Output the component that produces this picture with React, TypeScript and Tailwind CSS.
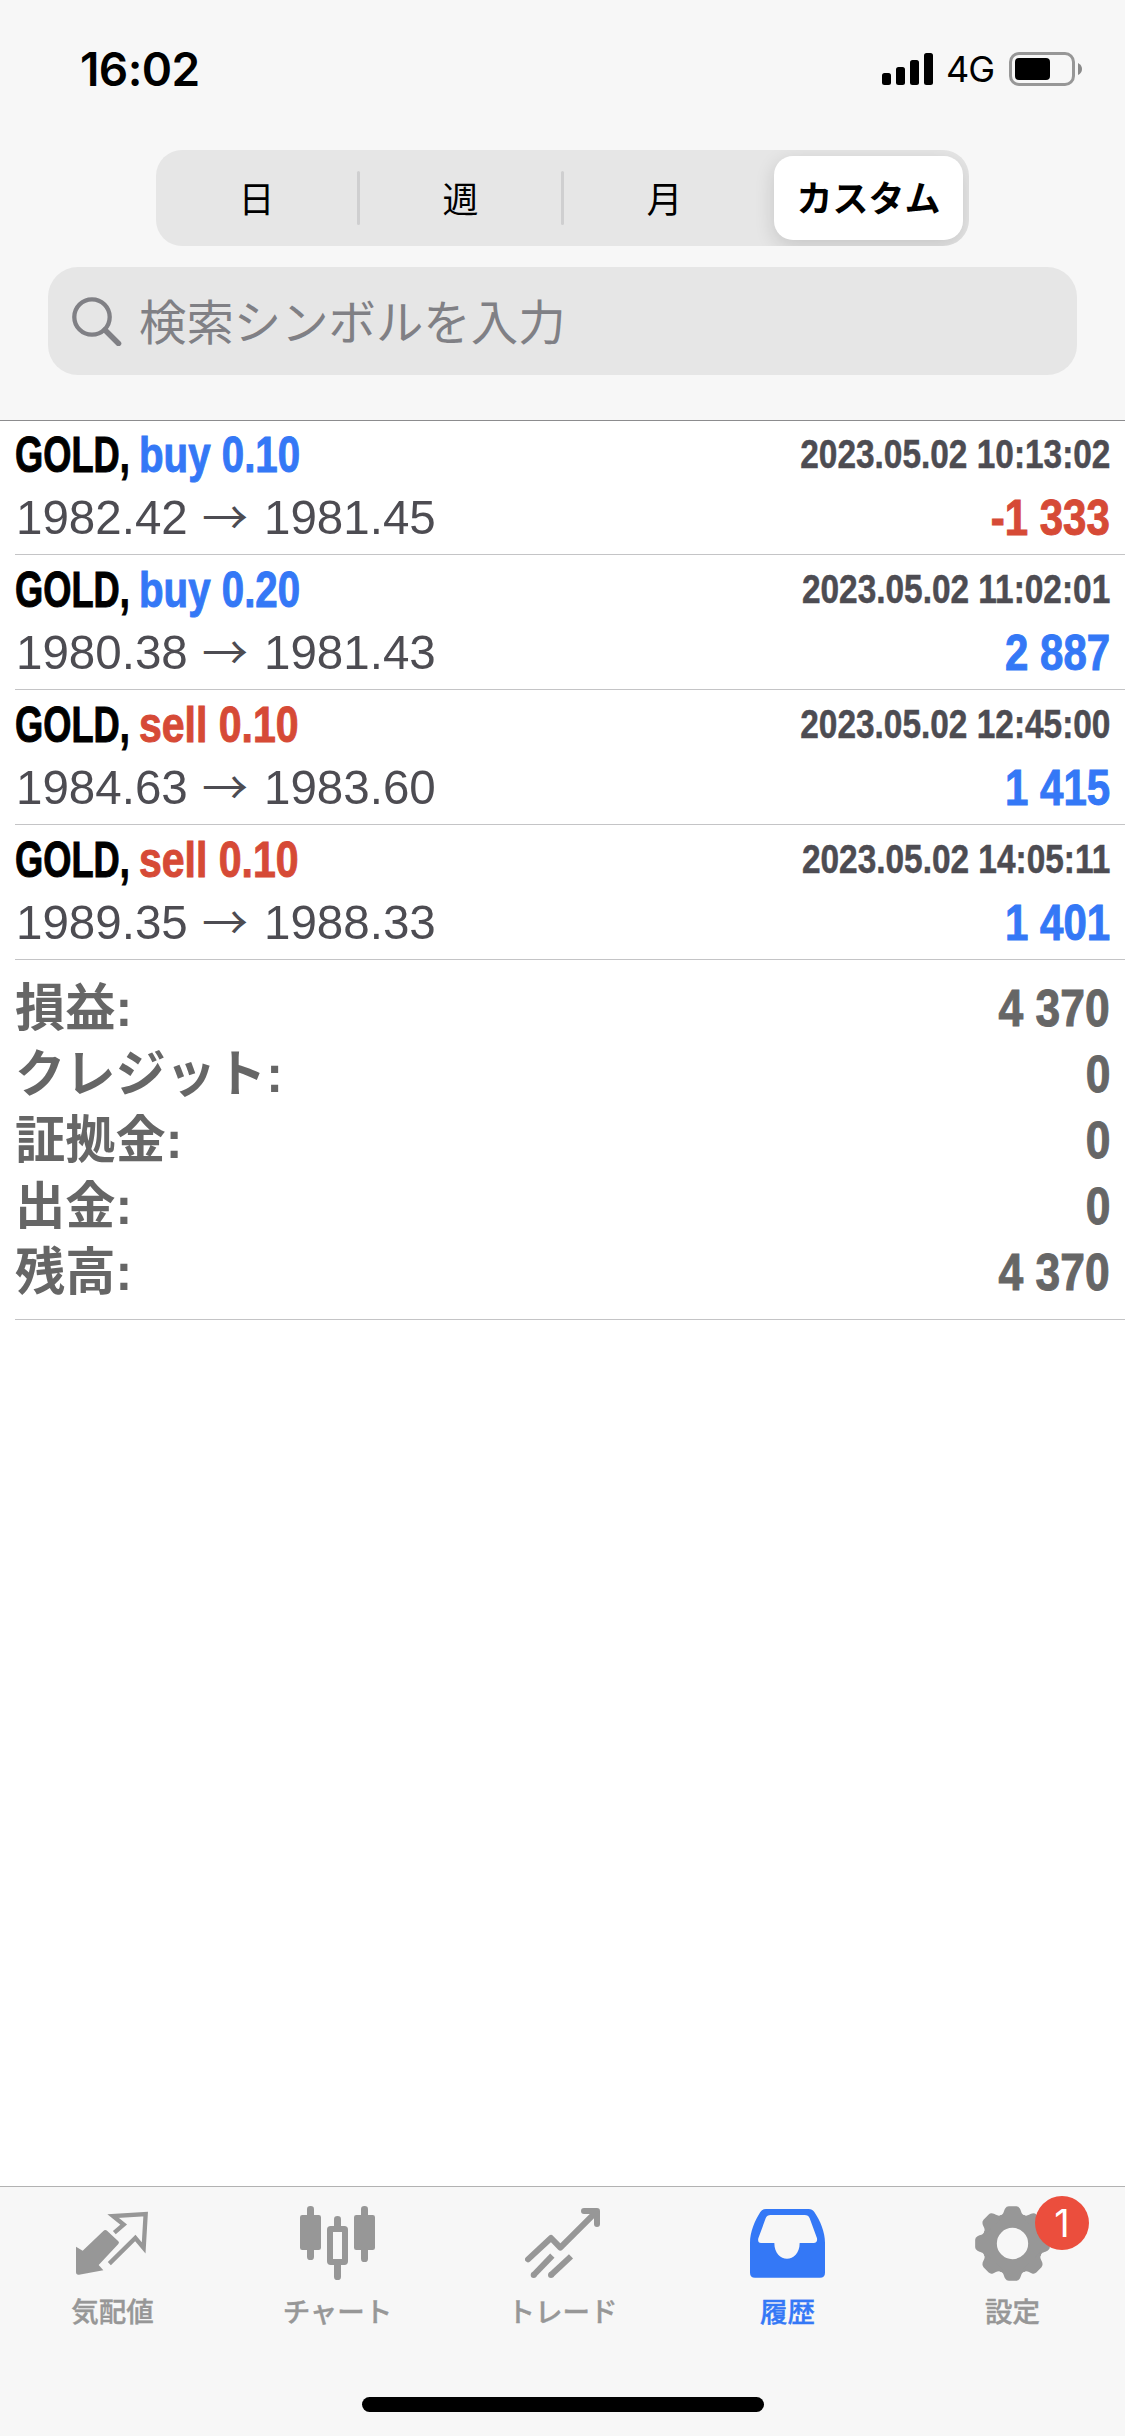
import { ReactNode } from "react";
import clsx from "clsx";

type Deal = {
    side: 'buy' | 'sell',
    volume: string,
    open: string,
    close: string,
    time: string,
    profit: string
}

const deals: Deal[] = [
    { side: 'buy', volume: '0.10', open: '1982.42', close: '1981.45', time: '2023.05.02 10:13:02', profit: '-1 333' },
    { side: 'buy', volume: '0.20', open: '1980.38', close: '1981.43', time: '2023.05.02 11:02:01', profit: '2 887' },
    { side: 'sell', volume: '0.10', open: '1984.63', close: '1983.60', time: '2023.05.02 12:45:00', profit: '1 415' },
    { side: 'sell', volume: '0.10', open: '1989.35', close: '1988.33', time: '2023.05.02 14:05:11', profit: '1 401' },
];

const totals = [
    { label: '損益:', value: '4 370' },
    { label: 'クレジット:', value: '0' },
    { label: '証拠金:', value: '0' },
    { label: '出金:', value: '0' },
    { label: '残高:', value: '4 370' },
];

const StatusBar = () => {
    return (
        <div className="flex h-[138px] items-start justify-between pl-[80px] pr-[43px] pt-[41px] font-['Inter',sans-serif] text-black">
            <div className="text-[46px] leading-[56px] font-semibold tracking-[-0.6px]">16:02</div>
            <div className="flex h-[56px] items-center">
                <svg className="h-8 w-[51px]" viewBox="0 0 51 32">
                    <rect x="0" y="20" width="9" height="12" rx="2.5" />
                    <rect x="14" y="14" width="9" height="18" rx="2.5" />
                    <rect x="28" y="7" width="9" height="25" rx="2.5" />
                    <rect x="42" y="0" width="9" height="32" rx="2.5" />
                </svg>
                <div className="ml-[13px] w-[50px] text-[36px] leading-[56px] tracking-[-1px]">4G</div>
                <svg className="ml-[13px] h-[34px] w-[73px]" viewBox="0 0 73 34">
                    <rect x="1.5" y="1.5" width="63" height="31" rx="8.5" fill="none" stroke="#979797" strokeWidth="3" />
                    <rect x="6" y="6" width="35" height="22" rx="4" />
                    <path d="M69 11 Q73 13 73 17 Q73 21 69 23Z" fill="#8a8a8a" />
                </svg>
            </div>
        </div>
    )
}

const PeriodTabs = () => {
    return (
        <div className="mx-auto mt-3 flex h-[96px] w-[813px] items-center overflow-hidden rounded-[26px] bg-[#e6e6e6] pr-[6px] text-[36px] leading-[50px] text-black">
            <div className="w-[201px] pb-[3px] text-center">日</div>
            <div className="h-[54px] w-[3px] rounded-full bg-[#cfcfd0]"></div>
            <div className="w-[201px] pb-[3px] text-center">週</div>
            <div className="h-[54px] w-[3px] rounded-full bg-[#cfcfd0]"></div>
            <div className="w-[201px] pb-[3px] text-center">月</div>
            <div className="ml-[9px] flex h-[84px] flex-1 items-center justify-center rounded-[19px] bg-white pb-[4px] font-bold shadow-[0_6px_20px_rgba(0,0,0,0.14)]">
                カスタム
            </div>
        </div>
    )
}

const SearchField = () => {
    return (
        <div className="mx-12 mt-[21px] flex h-[108px] items-center rounded-[30px] bg-[#e6e6e6] pl-6 text-[#808085]">
            <svg className="h-[50px] w-[50px]" viewBox="0 0 50 50" fill="none" stroke="currentColor">
                <circle cx="20" cy="21" r="17.7" strokeWidth="4.3" />
                <path d="M33 34 L46.500 47.500" strokeWidth="5.500" strokeLinecap="round" />
            </svg>
            <div className="ml-[17px] pb-[3px] text-[47.400px] leading-[60px]">検索シンボルを入力</div>
        </div>
    )
}

const DealItem = ({ deal }: { deal: Deal }) => {
    return (
        <div className="ml-[15px] h-[135px] border-b border-[#c4c4c6] pt-[5px] pr-[15px] font-['Liberation_Sans',Arial,sans-serif]">
            <div className="flex h-[60px] items-center text-[50px] font-bold [-webkit-text-stroke:1px_currentColor]">
                <div className="w-[124px]">
                    <span className="inline-block origin-left scale-x-[0.725] text-black">GOLD,</span>
                </div>
                <div className={clsx('w-[200px] whitespace-nowrap', deal.side === 'buy' ? 'text-[#3478f6]' : 'text-[#d64a36]')}>
                    <span className={clsx('inline-block origin-left', deal.side === 'buy' ? 'scale-x-[0.805]' : 'scale-x-[0.82]')}>{deal.side} {deal.volume}</span>
                </div>
                <div className="flex flex-1 justify-end pb-[3px] text-[40px] whitespace-nowrap text-[#4d4c52] [-webkit-text-stroke:0.5px_currentColor]">
                    <span className="inline-block origin-right scale-x-[0.835]">{deal.time}</span>
                </div>
            </div>
            <div className="flex h-[66px] items-center">
                <div className="flex items-center text-[49px] text-[#4d4c52]">
                    <div className="w-[187px] pl-px">
                        <span className="inline-block origin-left scale-x-[0.97]">{deal.open}</span>
                    </div>
                    <div className="w-[50px] pb-[7px] font-['Noto_Sans_CJK_JP',sans-serif] text-[46px] leading-[57px] font-normal">→</div>
                    <div className="ml-3">
                        <span className="inline-block origin-left scale-x-[0.97]">{deal.close}</span>
                    </div>
                </div>
                <div className={clsx('flex flex-1 justify-end text-[50px] font-bold [-webkit-text-stroke:1px_currentColor]', deal.profit.startsWith('-') ? 'text-[#d64a36]' : 'text-[#3478f6]')}>
                    <span className="inline-block origin-right scale-x-[0.84]">{deal.profit}</span>
                </div>
            </div>
        </div>
    )
}

const Totals = () => {
    return (
        <div className="ml-[15px] h-[360px] border-b border-[#c4c4c6] pt-[16px] pr-[15px] text-[#666666]">
            {totals.map(item => (
                <div key={item.label} className="flex h-[66px] items-center justify-between font-['Liberation_Sans','Noto_Sans_CJK_JP',sans-serif] text-[51px] leading-[66px] font-bold">
                    <div className="origin-left scale-x-[0.985]">{item.label}</div>
                    <span className="inline-block origin-right scale-x-[0.87] [-webkit-text-stroke:1px_currentColor]">{item.value}</span>
                </div>
            ))}
        </div>
    )
}

const QuotesIcon = () => (
    <svg className="size-[75px]" viewBox="0 0 225 225">
        <path d="M3 122 L23 134 L85 75 Q91 69 97 75 L130 106 Q134 110 130 114 L71 177 L85 193 L12 206 Q3 207 3 198Z" fill="currentColor" />
        <path d="M118 80 L146 56 L114 30 L212 24 L206 126 L181 96 L103 173" fill="none" stroke="currentColor" strokeWidth="13" />
    </svg>
)

const ChartIcon = () => (
    <svg className="size-[75px]" viewBox="0 0 225 225" fill="currentColor">
        <rect x="0" y="27" width="63" height="105" rx="7" />
        <rect x="21" y="0" width="21" height="162" rx="10" />
        <rect x="90" y="69" width="45" height="99" rx="2" fill="none" stroke="currentColor" strokeWidth="18" strokeLinejoin="round" />
        <path d="M102 62 V40 Q102 30 112.500 30 Q123 30 123 40 V62Z" />
        <path d="M102 175 V212 Q102 222 112.500 222 Q123 222 123 212 V175Z" />
        <rect x="162" y="27" width="63" height="105" rx="7" />
        <rect x="183" y="0" width="21" height="168" rx="10" />
    </svg>
)

const TradeIcon = () => (
    <svg className="size-[75px]" viewBox="0 0 225 225" fill="none" stroke="currentColor" strokeWidth="18">
        <path d="M9 160 L78 96 L106 125 L212 19" strokeLinecap="round" strokeLinejoin="round" />
        <path d="M177 15 H216 V54" strokeLinecap="round" strokeLinejoin="round" />
        <path d="M82 149 L26 207" />
        <path d="M138 151 L78 207" />
        <circle cx="26" cy="207" r="9" fill="currentColor" stroke="none" />
        <circle cx="78" cy="207" r="9" fill="currentColor" stroke="none" />
    </svg>
)

const HistoryIcon = () => (
    <svg className="size-[75px]" viewBox="0 0 225 225">
        <path
            d="M0 110 C0 78 14 45 31 18 Q37 9 48 9 H176 Q187 9 193 18 C211 45 225 78 225 110 V200 Q225 215 210 215 H15 Q0 215 0 200Z M62 27 Q51 27 47 37 L25 97 Q22 111 33 111 H73 C73 142 92 158 111 158 C130 158 149 142 149 111 H191 Q203 111 201 97 L179 37 Q175 27 164 27Z"
            fill="currentColor"
            fillRule="evenodd"
        />
    </svg>
)

const SettingsIcon = () => (
    <svg className="size-[75px]" viewBox="-112.500 -112.500 225 225">
        <circle r="69" fill="none" stroke="currentColor" strokeWidth="44" />
        {[0, 45, 90, 135, 180, 225, 270, 315].map(angle => (
            <path
                key={angle}
                transform={`rotate(${angle})`}
                d="M-40 -78 L-37 -84 C-25 -88 -27 -97 -22 -105 Q-18 -112 -11 -112 H11 Q18 -112 22 -105 C27 -97 25 -88 37 -84 L40 -78Z"
                fill="currentColor"
            />
        ))}
    </svg>
)

type TabProps = {
    label: string,
    icon: ReactNode,
    active?: boolean,
    badge?: number
}

const Tab = ({ label, icon, active, badge }: TabProps) => {
    return (
        <div className={clsx('relative flex flex-1 flex-col items-center pt-[19px]', active ? 'text-[#3478f6]' : 'text-[#979797]')}>
            {icon}
            <div className="mt-[9px] text-[27.500px] leading-10 font-medium [-webkit-text-stroke:0.4px_currentColor]">{label}</div>
            {badge &&
                <div className="absolute top-[9px] left-[135px] flex size-[54px] items-center justify-center rounded-full bg-[#eb4e3d] font-['Inter',sans-serif] text-[38px] text-white">
                    {badge}
                </div>
            }
        </div>
    )
}

export default function App() {
    return (
        <div className="flex h-[2436px] w-[1125px] flex-col bg-white font-['Noto_Sans_CJK_JP',sans-serif]">
            <div className="h-[421px] border-b border-[#8c8c8e] bg-[#f7f7f7]">
                <StatusBar />
                <PeriodTabs />
                <SearchField />
            </div>
            <div className="-mt-px flex-1">
                {deals.map(deal => <DealItem key={deal.time} deal={deal} />)}
                <Totals />
            </div>
            <div className="flex h-[250px] flex-col border-t border-[#b2b2b2] bg-[#f7f7f7]">
                <div className="flex h-[210px]">
                    <Tab label="気配値" icon={<QuotesIcon />} />
                    <Tab label="チャート" icon={<ChartIcon />} />
                    <Tab label="トレード" icon={<TradeIcon />} />
                    <Tab label="履歴" icon={<HistoryIcon />} active />
                    <Tab label="設定" icon={<SettingsIcon />} badge={1} />
                </div>
                <div className="mx-auto h-[15px] w-[402px] rounded-full bg-black"></div>
            </div>
        </div>
    )
}
